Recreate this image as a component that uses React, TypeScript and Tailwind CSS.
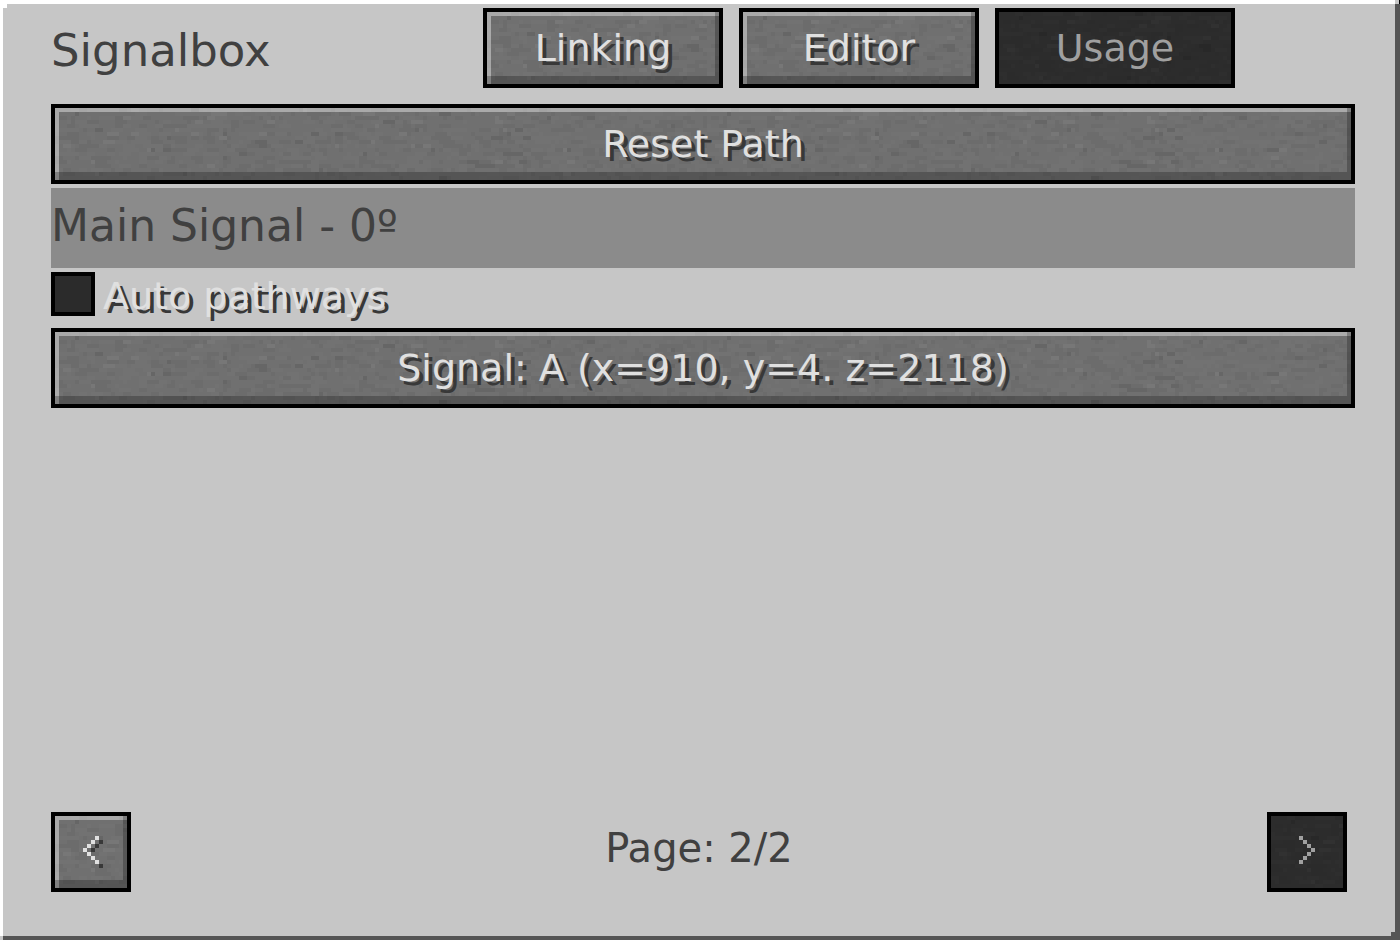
import { useId } from "react";
import type { ReactNode } from "react";

const CELL = 4;
const COLS = 163;
const ROWS = 18;

type Speck = { x: number; y: number; w: number; light: boolean; strength: number };

function makeSpecks(): Speck[] {
  let seed = 90210;
  const random = () => {
    seed = (seed * 1664525 + 1013904223) % 4294967296;
    return seed / 4294967296;
  };
  const specks: Speck[] = [];
  for (let y = 0; y < ROWS; y++) {
    let x = 0;
    while (x < COLS) {
      const w = Math.min(1 + Math.floor(random() * 2.4), COLS - x);
      const tone = random();
      if (tone < 0.5) {
        const light = tone < 0.25;
        const strong = random() < 0.1;
        const strength = light ? (strong ? 0.05 : 0.015) : strong ? 0.09 : 0.03;
        specks.push({ x, y, w, light, strength });
      }
      x += w;
    }
  }
  return specks;
}

const SPECKS = makeSpecks();

function StoneTexture({ dark }: { dark: boolean }) {
  const id = useId();
  return (
    <svg className="absolute inset-0 h-full w-full" aria-hidden="true" shapeRendering="crispEdges">
      <defs>
        <pattern id={id} width={COLS * CELL} height={ROWS * CELL} patternUnits="userSpaceOnUse">
          <rect width={COLS * CELL} height={ROWS * CELL} fill={dark ? "#2c2c2c" : "#707070"} />
          {SPECKS.map((s, i) => (
            <rect
              key={i}
              x={s.x * CELL}
              y={s.y * CELL}
              width={s.w * CELL}
              height={CELL}
              fill={s.light ? "#ffffff" : "#000000"}
              fillOpacity={dark && s.light ? s.strength / 2 : s.strength}
            />
          ))}
        </pattern>
      </defs>
      <rect width="100%" height="100%" fill={`url(#${id})`} />
    </svg>
  );
}

type StoneButtonProps = {
  children: ReactNode;
  disabled?: boolean;
  label?: string;
  size: string;
};

function StoneButton({ children, disabled = false, label, size }: StoneButtonProps) {
  return (
    <button
      type="button"
      disabled={disabled}
      aria-label={label}
      className={`relative flex h-20 items-center justify-center border-4 border-black text-[38px] leading-none ${size} ${
        disabled ? "text-[#a0a0a0]" : "text-[#e0e0e0] [text-shadow:4px_4px_0_#383838]"
      }`}
    >
      <StoneTexture dark={disabled} />
      {!disabled && (
        <span className="absolute inset-0 shadow-[inset_-4px_-8px_0_rgba(0,0,0,0.24),inset_4px_4px_0_rgba(255,255,255,0.4)]" />
      )}
      <span className="relative whitespace-nowrap">{children}</span>
    </button>
  );
}

const ARROW = [3, 2, 1, 0, 1, 2, 3];

function PixelArrow({ direction, shadow = false }: { direction: "left" | "right"; shadow?: boolean }) {
  const column = (c: number) => (direction === "left" ? c : 3 - c) * CELL;
  return (
    <svg
      className="block h-8 w-4 overflow-visible"
      viewBox="0 0 16 32"
      fill="currentColor"
      aria-hidden="true"
      shapeRendering="crispEdges"
    >
      {shadow &&
        ARROW.map((c, i) => (
          <rect key={`s${i}`} x={column(c) + CELL} y={(i + 1) * CELL} width={CELL} height={CELL} fill="#383838" />
        ))}
      {ARROW.map((c, i) => (
        <rect key={i} x={column(c)} y={i * CELL} width={CELL} height={CELL} />
      ))}
    </svg>
  );
}

export default function App() {
  return (
    <main className="relative flex min-h-screen flex-col border-t-4 border-r-[5px] border-b-4 border-l-[3px] border-t-white border-r-[#555555] border-b-[#555555] border-l-white bg-[#c6c6c6] pt-1 pr-10 pb-11 pl-12 font-['DejaVu_Sans',sans-serif] text-[#404040]">
      <span className="absolute top-0 left-0 size-1 bg-white" />
      <span className="absolute -top-1 -right-[5px] h-1 w-[5px] border-r border-black bg-[#c6c6c6]" />
      <span className="absolute right-0 bottom-0 size-1 bg-[#555555]" />
      <span className="absolute -bottom-1 -left-[3px] h-1 w-[3px] bg-[#c6c6c6]" />

      <header className="flex items-center pr-[120px]">
        <h1 className="flex-1 pt-1 text-[45px] leading-none">Signalbox</h1>
        <nav className="flex gap-4">
          <StoneButton size="w-60">Linking</StoneButton>
          <StoneButton size="w-60">Editor</StoneButton>
          <StoneButton size="w-60" disabled>
            Usage
          </StoneButton>
        </nav>
      </header>

      <section className="mt-4 flex flex-col gap-1">
        <StoneButton size="w-full">Reset Path</StoneButton>
        <div className="flex h-20 items-center bg-[#8b8b8b] pb-1 text-[44px] leading-none">Main Signal - 0º</div>
        <div className="mb-2 flex items-center gap-2">
          <input
            id="auto-pathways"
            type="checkbox"
            className="size-11 appearance-none border-4 border-black bg-[#2b2b2b] checked:bg-[#6f6f6f]"
          />
          <label
            htmlFor="auto-pathways"
            className="pt-1 text-[38px] leading-none text-[#e0e0e0] [text-shadow:4px_4px_0_#383838]"
          >
            Auto pathways
          </label>
        </div>
        <StoneButton size="w-full">Signal: A (x=910, y=4. z=2118)</StoneButton>
      </section>

      <footer className="mt-auto flex items-center justify-between pr-2">
        <StoneButton size="w-20" label="Previous page">
          <PixelArrow direction="left" shadow />
        </StoneButton>
        <p className="pb-2 text-[40px] leading-none">Page: 2/2</p>
        <StoneButton size="w-20" label="Next page" disabled>
          <PixelArrow direction="right" />
        </StoneButton>
      </footer>
    </main>
  );
}
